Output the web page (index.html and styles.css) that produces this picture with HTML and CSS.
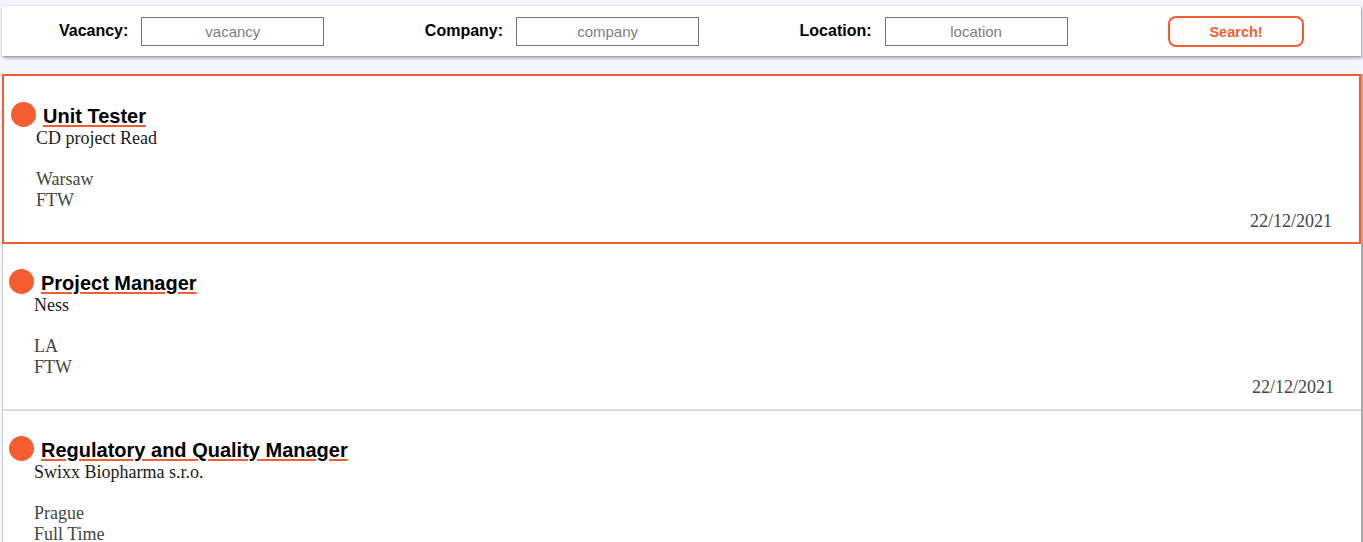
FILE: index.html
```html
<!DOCTYPE html>
<html lang="en">
<head>
<meta charset="utf-8">
<title>Jobs</title>
<link rel="stylesheet" href="styles.css">
</head>
<body>
<header class="search-bar">
  <label class="field"><span class="field-label">Vacancy:</span><input class="field-input" type="text" placeholder="vacancy"></label>
  <label class="field"><span class="field-label">Company:</span><input class="field-input" type="text" placeholder="company"></label>
  <label class="field"><span class="field-label">Location:</span><input class="field-input" type="text" placeholder="location"></label>
  <button class="search-btn" type="button">Search!</button>
</header>

<main class="job-list">
  <article class="job-card selected">
    <div class="job-head"><span class="dot"></span><h2 class="job-title">Unit Tester</h2></div>
    <div class="job-body">
      <div class="company">CD project Read</div>
      <div class="spacer"></div>
      <div class="meta">Warsaw</div>
      <div class="meta">FTW</div>
    </div>
    <div class="date">22/12/2021</div>
  </article>

  <article class="job-card">
    <div class="job-head"><span class="dot"></span><h2 class="job-title">Project Manager</h2></div>
    <div class="job-body">
      <div class="company">Ness</div>
      <div class="spacer"></div>
      <div class="meta">LA</div>
      <div class="meta">FTW</div>
    </div>
    <div class="date">22/12/2021</div>
  </article>

  <article class="job-card">
    <div class="job-head"><span class="dot"></span><h2 class="job-title">Regulatory and Quality Manager</h2></div>
    <div class="job-body">
      <div class="company">Swixx Biopharma s.r.o.</div>
      <div class="spacer"></div>
      <div class="meta">Prague</div>
      <div class="meta">Full Time</div>
    </div>
    <div class="date">22/12/2021</div>
  </article>
</main>
</body>
</html>
```

FILE: styles.css
```css
* { box-sizing: border-box; }

html, body {
  margin: 0;
  padding: 0;
  background: #f4f4fc;
  font-family: "Liberation Serif", "Times New Roman", serif;
}

body {
  padding: 6px 0 0 2px;
}

.search-bar {
  width: 1359px;
  height: 50px;
  background: #fff;
  display: flex;
  align-items: center;
  justify-content: center;
  gap: 100.5px;
  box-shadow: 1px 2px 3px rgba(0, 0, 0, 0.35), 0 0 1px rgba(0, 0, 0, 0.2);
  padding-top: 1px;
}

.field {
  display: flex;
  align-items: center;
  gap: 13px;
}

.field-label {
  font-family: "Liberation Sans", Arial, sans-serif;
  font-weight: bold;
  font-size: 16px;
  color: #000;
  margin-top: -2px;
}

.field-input {
  width: 183px;
  height: 29px;
  border: 1px solid #767676;
  border-radius: 0;
  padding: 0 4px;
  text-align: center;
  font-family: "Liberation Sans", Arial, sans-serif;
  font-size: 15px;
  color: #333;
  background: #fff;
}

.field-input::placeholder {
  color: #808080;
}

.search-btn {
  width: 136px;
  height: 31px;
  border: 2px solid #f45d2f;
  border-radius: 8px;
  background: #fff;
  color: #f45d2f;
  font-family: "Liberation Sans", Arial, sans-serif;
  font-weight: bold;
  font-size: 14.5px;
  padding: 0;
}

.job-list {
  margin-top: 18px;
  width: 1361px;
  border-right: 2px solid #a9a9a9;
}

.job-card {
  width: 1359px;
  background: #fff;
  padding: 28px 27px 13px 7px;
  box-shadow: inset 1px 0 0 #c9c9d2, inset 0 -2px 0 #dcdcdc;
}

.job-card.selected {
  border: 2px solid #f45d2f;
  padding-top: 29px;
  padding-bottom: 10px;
  box-shadow: none;
}

.job-head {
  display: flex;
  align-items: center;
  gap: 7px;
  height: 23px;
}

.dot {
  width: 25px;
  height: 25px;
  border-radius: 50%;
  background: #f45d2f;
  flex: none;
  margin-top: -4px;
}

.job-title {
  margin: 0;
  font-family: "Liberation Sans", Arial, sans-serif;
  font-weight: bold;
  font-size: 20px;
  line-height: 23px;
  color: #000;
  text-decoration: underline;
  text-decoration-color: #f45d2f;
  text-decoration-thickness: 2px;
  text-underline-offset: 2px;
}

.job-body {
  padding-left: 25px;
  font-size: 18px;
  line-height: 20.7px;
}

.company {
  color: #1a1a1a;
}

.spacer {
  height: 20.7px;
}

.meta {
  color: #444;
}

.date {
  text-align: right;
  font-size: 18px;
  line-height: 20.7px;
  color: #444;
}
```
